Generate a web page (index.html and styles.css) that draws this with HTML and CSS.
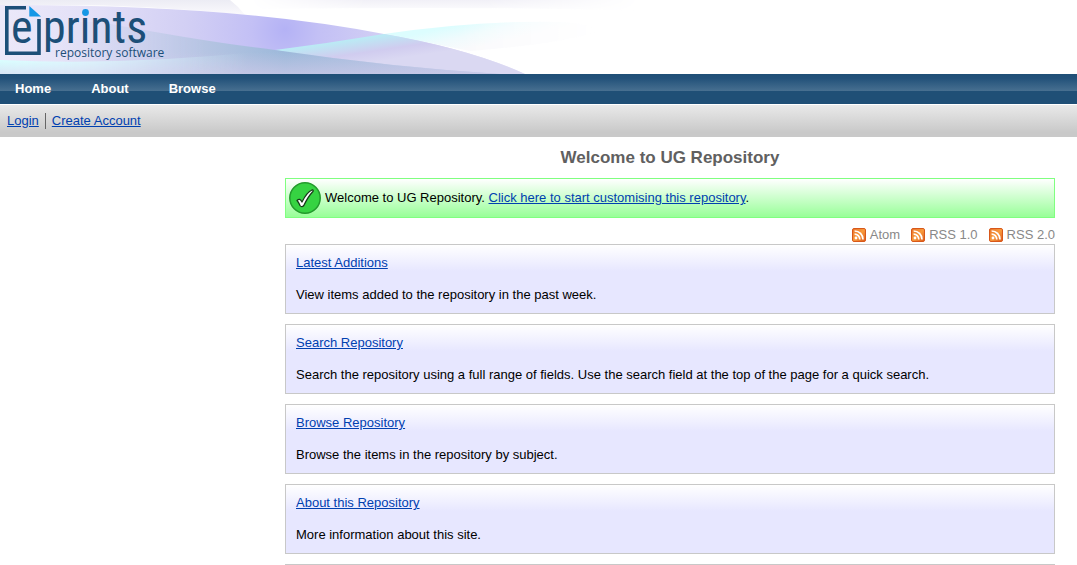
FILE: index.html
```html
<!DOCTYPE html>
<html lang="en">
<head>
<meta charset="utf-8">
<title>Welcome to UG Repository</title>
<link rel="stylesheet" href="styles.css">
</head>
<body>
<svg class="defs" width="0" height="0" aria-hidden="true">
  <linearGradient id="rssFill" x1="0" y1="0" x2="1" y2="1">
    <stop offset="0" stop-color="#e8722a"/><stop offset="0.5" stop-color="#f89a3c"/><stop offset="1" stop-color="#dc5a1c"/>
  </linearGradient>
  <symbol id="rss" viewBox="0 0 14 14">
    <rect x="0.5" y="0.5" width="13" height="13" rx="1.5" fill="url(#rssFill)" stroke="#d8581a"/>
    <circle cx="4" cy="10" r="1.4" fill="#fff"/>
    <path d="M2.6 6.2a5.200 5.200 0 0 1 5.200 5.200M2.6 3a8.400 8.400 0 0 1 8.400 8.400" fill="none" stroke="#fff" stroke-width="1.7"/>
  </symbol>
</svg>
<header class="banner">
  <svg class="waves" width="640" height="74" viewBox="0 0 640 74" aria-hidden="true">
    <defs>
      <linearGradient id="top1" x1="0" y1="0" x2="0" y2="1"><stop offset="0" stop-color="#ececf4"/><stop offset="1" stop-color="#fbfafd"/></linearGradient>
      <linearGradient id="top2" x1="0" y1="0" x2="0" y2="1"><stop offset="0" stop-color="#f1f0f7"/><stop offset="1" stop-color="#fdfdfe"/></linearGradient>
      <linearGradient id="top2Fade" x1="0" y1="0" x2="1" y2="0"><stop offset="0" stop-color="#000"/><stop offset="0.3" stop-color="#fff"/><stop offset="0.6" stop-color="#fff"/><stop offset="1" stop-color="#000"/></linearGradient>
      <mask id="top2Mask"><rect x="250" width="390" height="20" fill="url(#top2Fade)"/></mask>
      <radialGradient id="violet" gradientUnits="userSpaceOnUse" cx="285" cy="30" r="280"><stop offset="0" stop-color="#b4b2f5"/><stop offset="0.12" stop-color="#c3c0f5"/><stop offset="0.35" stop-color="#d2cff4"/><stop offset="0.7" stop-color="#e3e0f7"/><stop offset="1" stop-color="#ebe8f9"/></radialGradient>
      <linearGradient id="right" gradientUnits="userSpaceOnUse" x1="330" y1="41" x2="334" y2="68"><stop offset="0" stop-color="#b8eef5"/><stop offset="0.6" stop-color="#d0ccef"/><stop offset="1" stop-color="#dad8f2"/></linearGradient>
      <linearGradient id="blue" x1="0" y1="0" x2="1" y2="0"><stop offset="0" stop-color="#dcdff3"/><stop offset="0.4" stop-color="#b7c5e3"/><stop offset="0.57" stop-color="#9db9da"/><stop offset="1" stop-color="#bdc8e7"/></linearGradient>
      <linearGradient id="haze" gradientUnits="userSpaceOnUse" x1="0" y1="52" x2="0" y2="74"><stop offset="0" stop-color="#d0cae9" stop-opacity="0"/><stop offset="1" stop-color="#d0cae9" stop-opacity="0.65"/></linearGradient>
      <linearGradient id="blueFade" x1="0" y1="0" x2="1" y2="0"><stop offset="0.12" stop-color="#000"/><stop offset="0.4" stop-color="#fff"/></linearGradient>
      <mask id="blueMask"><rect width="510" height="74" fill="url(#blueFade)"/></mask>
      <linearGradient id="cyan" gradientUnits="userSpaceOnUse" x1="460" y1="24" x2="466" y2="50"><stop offset="0" stop-color="#dcfdfe"/><stop offset="0.5" stop-color="#f0fbfd"/><stop offset="1" stop-color="#fafafc"/></linearGradient>
      <linearGradient id="cyanFade" x1="0" y1="0" x2="1" y2="0"><stop offset="0.4" stop-color="#fff"/><stop offset="1" stop-color="#000"/></linearGradient>
      <mask id="cyanMask"><rect x="370" y="20" width="230" height="40" fill="url(#cyanFade)"/></mask>
      <linearGradient id="low" gradientUnits="userSpaceOnUse" x1="0" y1="60" x2="0" y2="74"><stop offset="0" stop-color="#d9ffff"/><stop offset="1" stop-color="#d8e6f6"/></linearGradient>
      <linearGradient id="lowFade" x1="0" y1="0" x2="1" y2="0"><stop offset="0" stop-color="#fff"/><stop offset="1" stop-color="#000"/></linearGradient>
      <mask id="lowMask"><rect width="250" height="74" fill="url(#lowFade)"/></mask>
    </defs>
    <path d="M0 0H230Q238 6 245 15Q120 2 0 6Z" fill="url(#top1)"/>
    <path d="M250 0H640V11Q500 6 250 9Z" fill="url(#top2)" mask="url(#top2Mask)"/>
    <path d="M384 34Q480 20 560 22Q596 24 596 32Q560 44 470 51Z" fill="url(#cyan)" mask="url(#cyanMask)"/>
    <path d="M0 5Q230 4 384 34Q470 49 525 74H0Z" fill="url(#violet)"/>
    <path d="M384 34Q470 49 525 74H400L275 50Q330 43 384 34Z" fill="url(#right)"/>
    <g mask="url(#blueMask)">
      <path d="M100 22Q200 41 275 50Q390 67 500 74H0V22Z" fill="url(#blue)"/>
      <path d="M100 22Q200 41 275 50Q390 67 500 74H0V22Z" fill="url(#haze)"/>
    </g>
    <path d="M0 60Q130 66 275 50L240 74H0Z" fill="url(#low)" mask="url(#lowMask)"/>
  </svg>
  <a class="logo" href="#" aria-label="eprints repository software">
    <svg width="170" height="74" viewBox="0 0 170 74">
      <path d="M26 7.800H6.800V53.200H39V19" fill="none" stroke="#1c4f78" stroke-width="3.600"/>
      <path d="M29.300 6V16.500H41Z" fill="#1597e6"/>
      <text class="logo-name" x="11" y="43">e</text>
      <text class="logo-name" x="43" y="43">prints</text>
      <circle cx="85.500" cy="12.500" r="3.400" fill="#1597e6"/>
      <text class="logo-tag" x="55" y="57">repository software</text>
    </svg>
  </a>
</header>
<nav class="menu">
  <a href="#">Home</a>
  <a href="#">About</a>
  <a href="#">Browse</a>
</nav>
<div class="tools">
  <a href="#">Login</a>
  <a href="#">Create Account</a>
</div>
<main class="content">
  <h1>Welcome to UG Repository</h1>
  <div class="message">
    <svg width="32" height="32" viewBox="0 0 32 32" aria-hidden="true">
      <circle cx="16" cy="16" r="15.200" fill="#36d342" stroke="#239a2c" stroke-width="1.500"/>
      <path d="M8 18.500C10 16.500 11.500 17 13 20C16 14 19 9.500 23 8C24.500 7.800 24.500 9 23.500 10C20 13.500 17.500 18 14.800 23.500C13.500 25.200 12 25 11 23.500C10.200 21.500 9.500 20 8 18.500Z" fill="#fff" stroke="#173a19" stroke-width="1.300" stroke-linejoin="round"/>
    </svg>
    <p>Welcome to UG Repository. <a href="#">Click here to start customising this repository</a>.</p>
  </div>
  <div class="feeds">
    <a href="#"><svg width="14" height="14" aria-hidden="true"><use href="#rss"/></svg>Atom</a>
    <a href="#"><svg width="14" height="14" aria-hidden="true"><use href="#rss"/></svg>RSS 1.0</a>
    <a href="#"><svg width="14" height="14" aria-hidden="true"><use href="#rss"/></svg>RSS 2.0</a>
  </div>
  <div class="cards">
    <section class="card"><a href="#">Latest Additions</a><p>View items added to the repository in the past week.</p></section>
    <section class="card"><a href="#">Search Repository</a><p>Search the repository using a full range of fields. Use the search field at the top of the page for a quick search.</p></section>
    <section class="card"><a href="#">Browse Repository</a><p>Browse the items in the repository by subject.</p></section>
    <section class="card"><a href="#">About this Repository</a><p>More information about this site.</p></section>
    <hr class="divider">
  </div>
</main>
</body>
</html>
```
FILE: styles.css
```css
body {
  margin: 0;
  background: #fff;
  color: #000;
  font: 13px/16px "Liberation Sans", Arial, sans-serif;
}
a {
  color: #0040b0;
}
p {
  margin: 0;
}
.defs {
  position: absolute;
}
.banner {
  position: relative;
}
.waves {
  position: absolute;
  top: 0;
  left: 0;
}
.logo {
  position: relative;
  display: block;
  width: 170px;
}
.logo svg {
  display: block;
}
.logo-name,
.logo-tag {
  fill: #1c4f78;
}
.logo-name {
  font: 46px "Roboto Condensed", "Open Sans", "Noto Sans", sans-serif;
}
.logo-tag {
  font: 12px "Open Sans", "Noto Sans", sans-serif;
}
.menu {
  display: flex;
  gap: 40px;
  padding: 7px 15px;
  background: linear-gradient(#1f4f76 0, #23527a 15%, #476f90 56%, #1f4f76 57%);
}
.menu a {
  color: #fff;
  font-weight: bold;
  text-decoration: none;
}
.tools {
  display: flex;
  margin-top: 1px;
  padding: 8px 7px;
  background: linear-gradient(#e9e9e9, #c9c9c9 85%);
}
.tools a + a {
  margin-left: 6px;
  padding-left: 6px;
  border-left: 1px solid #666;
}
.content {
  padding: 11px 22px 0 285px;
}
h1 {
  margin: 0 0 10px;
  color: #606060;
  font-size: 17px;
  line-height: 20px;
  text-align: center;
}
.message {
  display: flex;
  align-items: center;
  gap: 4px;
  padding: 3px;
  border: 1px solid #80ff80;
  background: linear-gradient(#fff, #98ff98);
}
.feeds {
  display: flex;
  justify-content: flex-end;
  gap: 11px;
  padding: 9px 0 1px;
}
.feeds a {
  display: flex;
  align-items: center;
  gap: 4px;
  color: #888;
  text-decoration: none;
}
.cards {
  display: grid;
  gap: 10px;
}
.card {
  padding: 10px;
  border: 1px solid #c8c8c8;
  background: linear-gradient(#fff, #e7e7ff 26px);
}
.card p {
  margin-top: 16px;
}
.divider {
  width: 100%;
  margin: 0;
  border: 0;
  border-top: 1px solid #c8c8c8;
}
```
